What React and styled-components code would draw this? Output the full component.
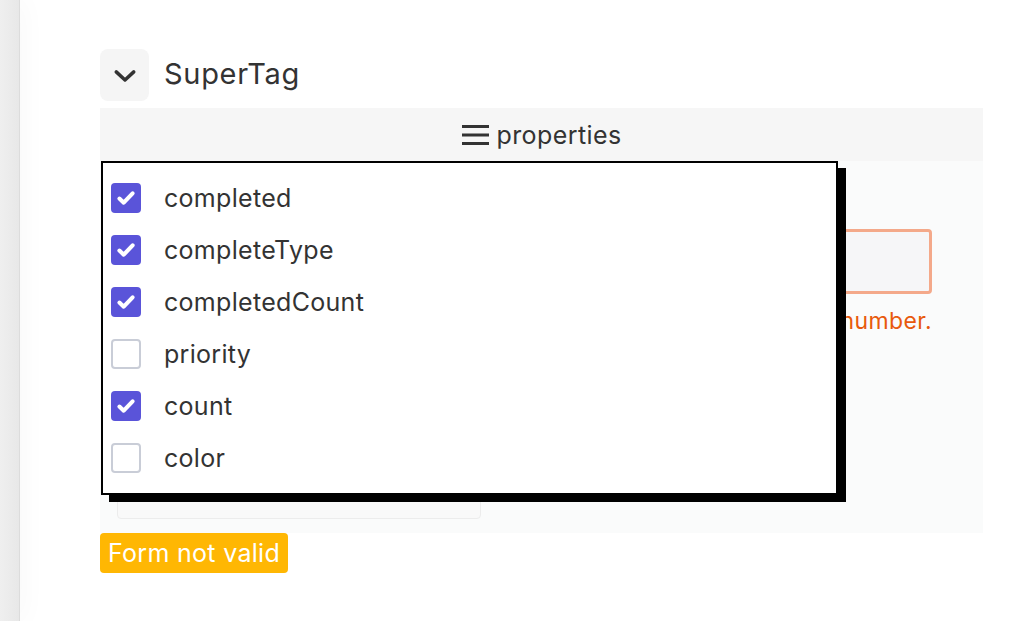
import React from "react";
import styled, { createGlobalStyle } from "styled-components";

const GlobalStyle = createGlobalStyle`
  html, body { margin: 0; padding: 0; background: #fff; }
  body { font-family: Inter, "Noto Sans", sans-serif; color: #333; }
  * { box-sizing: border-box; }
`;

const Page = styled.div`
  display: flex;
  min-height: 621px;
`;

const Sidebar = styled.div`
  width: 20px;
  flex: none;
  background: linear-gradient(to right, #efefef, #e8e8e8);
  border-right: 1px solid #dcdcdc;
  box-shadow: 2px 0 28px rgba(0, 0, 0, 0.035);
`;

const Main = styled.main`
  flex: 1;
  padding: 49px 52px 0 80px;
`;

const TitleRow = styled.div`
  display: flex;
  align-items: center;
  gap: 15px;
`;

const ToggleButton = styled.button`
  width: 49px;
  height: 52px;
  border: none;
  border-radius: 8px;
  background: #f5f5f5;
  display: flex;
  align-items: center;
  justify-content: center;
  padding: 0;
  color: #333;
`;

const Title = styled.h2`
  margin: 0 0 4px;
  font-size: 29px;
  font-weight: 400;
  letter-spacing: 0.7px;
  color: #333;
  line-height: 1;
`;

const Panel = styled.section`
  margin-top: 7px;
  width: 883px;
`;

const PanelHeader = styled.div`
  height: 53px;
  background: #f6f6f6;
  display: flex;
  align-items: center;
  justify-content: center;
  gap: 8px;
  font-size: 25px;
  letter-spacing: 0.4px;
  color: #333;
`;

const PanelBody = styled.div`
  position: relative;
  height: 372px;
  background: #fafbfb;
  padding: 68px 51px 0 17px;
  display: flex;
  flex-direction: column;
`;

const Field = styled.div`
  display: flex;
  flex-direction: column;
`;

const Input = styled.div`
  height: 65px;
  border: 3px solid #f4a98a;
  border-radius: 4px;
  background: #f6f6f8;
`;

const ErrorText = styled.div`
  margin-top: 13px;
  text-align: right;
  color: #e8590c;
  font-size: 23px;
  letter-spacing: 0.4px;
`;

const SubBox = styled.div`
  margin-top: 126px;
  width: 364px;
  height: 58px;
  border: 1px solid #ececec;
  border-radius: 4px;
  background: #f9f9f9;
`;

const Dropdown = styled.div`
  position: absolute;
  top: 0;
  left: 1px;
  width: 737px;
  height: 334px;
  background: #fff;
  border: 2px solid #000;
  box-shadow: 8px 7px 0 #000;
  padding: 9px 8px;
  display: flex;
  flex-direction: column;
`;

const Option = styled.label`
  height: 52px;
  display: flex;
  align-items: center;
  gap: 23px;
  font-size: 25px;
  letter-spacing: 0.3px;
  color: #333;
`;

const Box = styled.span`
  width: 30px;
  height: 30px;
  flex: none;
  border-radius: 4px;
  display: flex;
  align-items: center;
  justify-content: center;
  background: ${(p) => (p.$checked ? "#5a54d9" : "#fff")};
  border: ${(p) => (p.$checked ? "none" : "2px solid #c9cdd7")};
`;

const Badge = styled.div`
  display: inline-block;
  background: #ffb703;
  color: #fff;
  font-size: 25px;
  letter-spacing: 0.3px;
  line-height: 40px;
  padding: 0 8px;
  border-radius: 4px;
`;

const Chevron = () => (
  <svg width="30" height="30" viewBox="0 0 24 24" fill="none" stroke="#333" strokeWidth="2.8" strokeLinecap="round" strokeLinejoin="round">
    <path d="M5 9.5l7 6.5 7-6.5" />
  </svg>
);

const Hamburger = () => (
  <svg width="27" height="24" viewBox="0 0 27 24">
    <rect x="0" y="2" width="27" height="3" fill="#333" />
    <rect x="0" y="10.5" width="27" height="3" fill="#333" />
    <rect x="0" y="19" width="27" height="3" fill="#333" />
  </svg>
);

const Check = () => (
  <svg width="24" height="24" viewBox="0 0 20 20" fill="none" stroke="#fff" strokeWidth="3.4" strokeLinecap="round" strokeLinejoin="round">
    <path d="M4.5 10.5l3.6 3.4 7.4-7.8" />
  </svg>
);

const options = [
  { name: "completed", checked: true },
  { name: "completeType", checked: true },
  { name: "completedCount", checked: true },
  { name: "priority", checked: false },
  { name: "count", checked: true },
  { name: "color", checked: false },
];

export default function App() {
  return (
    <>
      <GlobalStyle />
      <Page>
        <Sidebar />
        <Main>
          <TitleRow>
            <ToggleButton>
              <Chevron />
            </ToggleButton>
            <Title>SuperTag</Title>
          </TitleRow>
          <Panel>
            <PanelHeader>
              <Hamburger />
              <span>properties</span>
            </PanelHeader>
            <PanelBody>
              <Field>
                <Input />
                <ErrorText>Value must be a number.</ErrorText>
              </Field>
              <SubBox />
              <Dropdown>
                {options.map((o) => (
                  <Option key={o.name}>
                    <Box $checked={o.checked}>{o.checked && <Check />}</Box>
                    {o.name}
                  </Option>
                ))}
              </Dropdown>
            </PanelBody>
          </Panel>
          <Badge>Form not valid</Badge>
        </Main>
      </Page>
    </>
  );
}
